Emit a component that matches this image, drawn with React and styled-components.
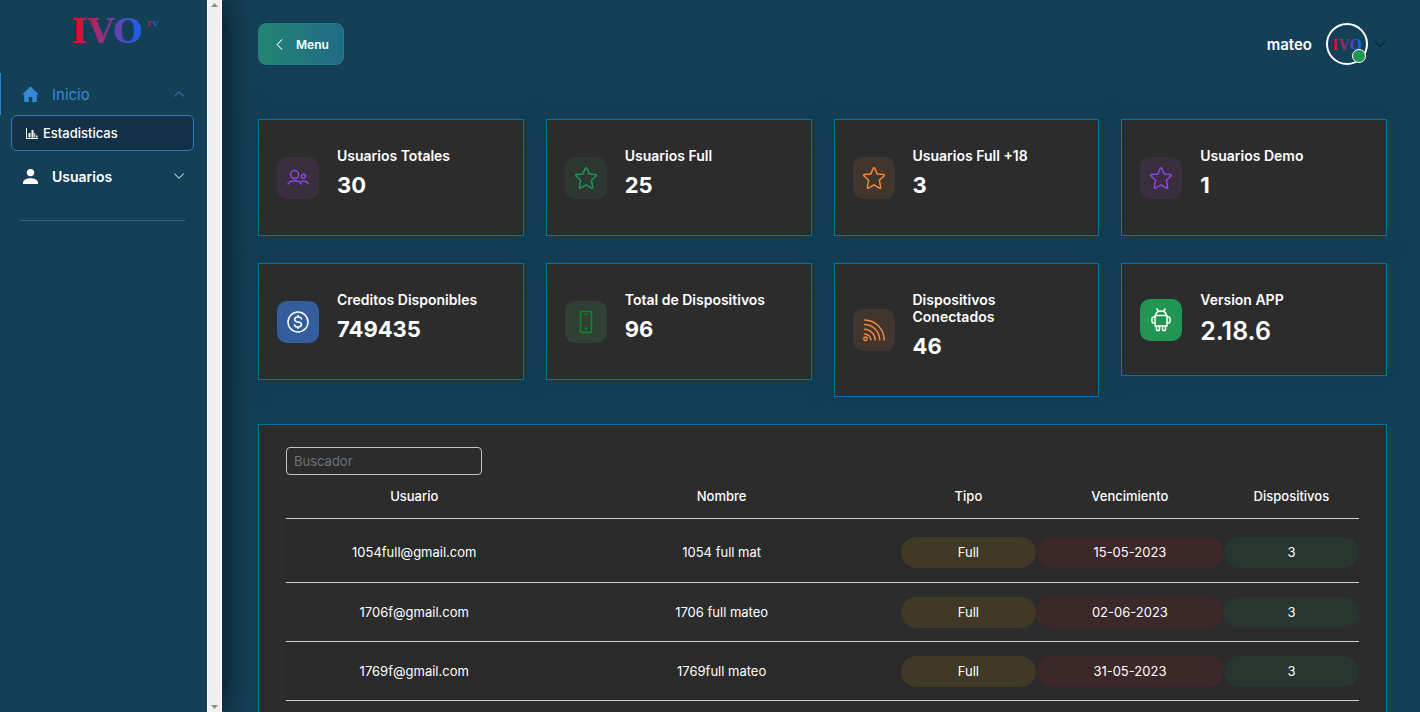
import React, { useState } from "react";
import styled, { createGlobalStyle } from "styled-components";
import { BsChevronDown, BsChevronLeft, BsChevronUp } from "react-icons/bs";

const GlobalStyle = createGlobalStyle`
*, *::before, *::after {
  box-sizing: border-box;
}
body {
  margin: 0;
  background: #144057;
  color: #fff;
  font-family: Inter, "Liberation Sans", sans-serif;
  font-size: 13px;
}
button, input {
  font-family: inherit;
}
h1, h2, p {
  margin: 0;
}
`;

const Page = styled.div`
display: flex;
height: 100vh;
overflow: hidden;
`;

const Sidebar = styled.aside`
display: flex;
flex: 0 0 222px;
box-shadow: 0 0 30px rgba(0, 0, 0, .75);
z-index: 1;
background: #144057;
`;

const SideContent = styled.div`
flex: 1;
`;

const ScrollTrack = styled.div`
display: flex;
flex-direction: column;
justify-content: space-between;
align-items: center;
width: 15px;
padding: 3px 0;
background: #f0f0f0;
border-left: 1px solid #fff;
border-right: 1px solid #fff;
`;

const Brand = styled.h1`
display: flex;
justify-content: center;
height: 73px;
padding-left: 11px;
`;

const SideNav = styled.nav`
display: flex;
flex-direction: column;
`;

const NavButton = styled.button`
display: flex;
align-items: center;
gap: 12px;
height: 42px;
padding: 0 22px 0 20px;
border: 0;
border-left: 1px solid ${pr => pr.$active ? "#3182ce" : "transparent"};
background: none;
color: ${pr => pr.$active ? "#3788d8" : "#fff"};
font-size: ${pr => pr.$active ? "15px" : "14px"};
font-weight: ${pr => pr.$active ? 400 : 600};
text-align: left;
cursor: pointer;

span {
  flex: 1;
}
`;

const SubLink = styled.a`
display: flex;
align-items: center;
gap: 5px;
height: 36px;
margin: 0 13px 4px 11px;
padding: 0 14px;
border: 1px solid #2f77bd;
border-radius: 6px;
background: #123147;
color: #fff;
font-weight: 500;
text-decoration: none;
`;

const Divider = styled.hr`
height: 1px;
margin: 23px 22px 0 20px;
border: 0;
background: #3b6275;
`;

const Main = styled.main`
display: flex;
flex: 1;
flex-direction: column;
min-width: 0;
padding: 23px 33px 0 36px;
overflow: hidden;
`;

const TopBar = styled.header`
display: flex;
align-items: center;
justify-content: space-between;
height: 42px;
margin-bottom: 54px;
`;

const MenuButton = styled.button`
display: flex;
align-items: center;
gap: 10px;
height: 42px;
padding: 0 14px;
border: 1px solid #247f80;
border-radius: 8px;
background: linear-gradient(90deg, #228573, #216b86);
color: #fff;
font-size: 12px;
font-weight: 600;
cursor: pointer;
`;

const UserButton = styled.button`
display: flex;
align-items: center;
padding: 0;
border: 0;
background: none;
color: #fff;
font-size: 15px;
font-weight: 600;
cursor: pointer;

> svg {
  margin-left: 5px;
  color: #0b1e2a;
}
`;

const Avatar = styled.span`
position: relative;
display: flex;
align-items: center;
justify-content: center;
width: 42px;
height: 42px;
margin-left: 14px;
border: 2px solid #fff;
border-radius: 50%;
`;

const OnlineDot = styled.i`
position: absolute;
right: 0;
bottom: 0;
width: 14px;
height: 14px;
border: 1px solid #fff;
border-radius: 50%;
background: #219653;
`;

const Cards = styled.section`
display: grid;
grid-template-columns: repeat(4, 1fr);
align-items: start;
gap: 27px 22px;
margin-bottom: 27px;
`;

const Card = styled.article`
display: flex;
align-items: center;
gap: 18px;
padding: 27px 18px;
border: 1px solid #0b70a8;
background: #2c2c2c;
box-shadow: 0 0 24px rgba(10, 45, 65, .25);
`;

const IconBox = styled.div`
display: flex;
flex: 0 0 42px;
align-items: center;
justify-content: center;
height: 42px;
border-radius: 10px;
background: ${pr => pr.$bg};
color: ${pr => pr.$color};
`;

const CardTitle = styled.h2`
max-width: 150px;
font-size: 14px;
font-weight: 600;
line-height: 17px;
`;

const CardValue = styled.p`
margin: 8px 0 ${pr => pr.$large ? "2px" : "10px"};
font-size: ${pr => pr.$large ? "25px" : "22px"};
font-weight: ${pr => pr.$large ? 600 : 700};
line-height: ${pr => pr.$large ? "30px" : "26px"};
`;

const Panel = styled.section`
flex: 1;
padding: 22px 27px 0;
border: 1px solid #0b70a8;
border-bottom: 0;
background: #2c2c2c;
`;

const SearchInput = styled.input`
display: block;
width: 196px;
height: 28px;
padding: 0 7px;
border: 1px solid #c4c7ca;
border-radius: 4px;
background: transparent;
color: #fff;
font-size: 13px;

&::placeholder {
  color: #6c757d;
  opacity: 1;
}
`;

const Table = styled.table`
width: 100%;
table-layout: fixed;
border-spacing: 0;
text-align: center;
`;

const HeadCell = styled.th`
width: ${pr => pr.$width};
height: 44px;
padding: 0 0 2px;
border-bottom: 1px solid #d0d0d0;
font-weight: 500;
`;

const Cell = styled.td`
padding: 14px 0 13px;
border-bottom: 1px solid #d0d0d0;
font-weight: 400;

tr:first-child > & {
  padding: 18px 0 14px;
}
tr:nth-child(odd) > & {
  background: #2a2a2a;
}
`;

const Pill = styled.span`
display: block;
border-radius: 16px;
background: ${pr => pr.$bg || "transparent"};
line-height: 31px;
`;

const Stops = () => (
  <>
    <stop offset="0" stopColor="#ff0010" />
    <stop offset=".5" stopColor="#83368e" />
    <stop offset="1" stopColor="#0a66ff" />
  </>
);

const Logo = () => (
  <svg width="120" height="60" viewBox="0 0 120 60" role="img" aria-label="IVO TV">
    <defs>
      <linearGradient id="logo" gradientUnits="userSpaceOnUse" x1="20" y1="0" x2="96" y2="0"><Stops /></linearGradient>
      <linearGradient id="logoTv" gradientUnits="userSpaceOnUse" x1="97" y1="0" x2="109" y2="0"><Stops /></linearGradient>
    </defs>
    <g fontFamily="DejaVu Serif, serif" fontWeight="700">
      <text x="58" y="43" fontSize="34" textAnchor="middle" fill="url(#logo)">IVO</text>
      <text x="97" y="26" fontSize="8" fill="url(#logoTv)">TV</text>
    </g>
  </svg>
);

const AvatarLogo = () => (
  <svg width="34" height="30" viewBox="0 0 34 30" aria-hidden="true">
    <defs>
      <linearGradient id="avatar" gradientUnits="userSpaceOnUse" x1="3" y1="0" x2="31" y2="0"><Stops /></linearGradient>
    </defs>
    <text x="17" y="21" fontFamily="Liberation Serif, serif" fontWeight="700" fontSize="16" textAnchor="middle" fill="url(#avatar)">IVO</text>
  </svg>
);

const HomeIcon = () => (
  <svg width="19" height="17" viewBox="0 0 19 17" fill="currentColor">
    <path d="M9.5.5 1 8.4h2.2V16h4.6v-5h3.4v5h4.6V8.4H18z" />
  </svg>
);

const PersonIcon = () => (
  <svg width="19" height="17" viewBox="0 0 19 17" fill="currentColor">
    <circle cx="9.5" cy="4.6" r="3.7" />
    <path d="M2 16v-1.600C2 11.700 6.500 10.200 9.500 10.200S17 11.700 17 14.400V16z" />
  </svg>
);

const ChartIcon = () => (
  <svg width="12" height="12" viewBox="0 0 12 12" fill="currentColor">
    <path d="M0 1h1v10h11v1H0zM2.500 6h2v4.500h-2zM5.500 3h2v7.500h-2zM8.200 6h1v4.500h-1zM10 8.500h1.500v2H10z" />
  </svg>
);

const Arrow = ({ up }) => (
  <svg width="7" height="4" viewBox="0 0 7 4" fill="#8c8c8c">
    <path d={up ? "M0 4 3.500 0 7 4z" : "M0 0h7L3.500 4z"} />
  </svg>
);

const Line = ({ children, width = 1.3 }) => (
  <svg width="24" height="24" viewBox="0 0 24 24" fill="none" stroke="currentColor" strokeWidth={width} strokeLinecap="round" strokeLinejoin="round">
    {children}
  </svg>
);

const UsersIcon = () => (
  <Line width={1.5}>
    <circle cx="8.600" cy="8.600" r="4" />
    <circle cx="17.400" cy="10.300" r="2" />
    <path d="M2 18c2.600-4.200 10.600-4.200 13.400 0M15.400 15.600c2.300-1 5-.3 6.800 1.900" />
  </Line>
);

const StarIcon = () => (
  <Line width={1.5}>
    <path d="M11.300 2.200c.3-.6 1.100-.6 1.400 0l2.500 5.700 6.300.7c.8.100 1.100.9.500 1.400l-4.600 4.300 1.300 7.100c.1.700-.6 1.200-1.200.8L12 18.800l-5.500 3.400c-.6.400-1.300-.1-1.200-.8l1.300-7.100L2 10c-.6-.5-.3-1.300.5-1.400l6.300-.7z" />
  </Line>
);

const MoneyIcon = () => (
  <Line width={1.5}>
    <circle cx="12" cy="12" r="10" />
    <path d="M15.500 9c-.2-1.400-1.300-2-3-2H12c-2 0-3.300.8-3.300 2.400S10 11.800 12 12s3.500.8 3.500 2.500S14 17 12 17s-3.300-.7-3.500-2.200M12 5.500V7m0 10v1.500" />
  </Line>
);

const PhoneIcon = () => (
  <Line width={1.5}>
    <rect x="6.500" y="1.500" width="11" height="21" rx="1.500" />
    <path d="M10.500 4.500h3" />
    <circle cx="12" cy="18.500" r=".6" />
  </Line>
);

const SignalIcon = () => (
  <Line width={1.5}>
    <circle cx="3.500" cy="20.800" r="1.700" />
    <path d="M2.500 16a6.500 6.500 0 0 1 6.500 6M2.500 11.300a11 11 0 0 1 10.700 10.700M2.500 6.600A15.400 15.400 0 0 1 17.700 22M2.500 2A20 20 0 0 1 22.200 22" />
  </Line>
);

const AndroidIcon = () => (
  <Line width={1.5}>
    <path d="M6 7.500h12V18H6zM6.500 7.300C7 4.600 9 3 12 3s5 1.600 5.500 4.300M8 1l1.500 2.500M16 1l-1.500 2.500" />
    <path d="M6 9H4.500C3.400 9 3 9.500 3 10.500v3c0 1 .5 1.500 1.500 1.500H6M18 9h1.500c1.100 0 1.500.5 1.500 1.500v3c0 1-.5 1.500-1.500 1.500H18M7.500 18v3.500c0 1.500 3 1.500 3 0V18m3 0v3.500c0 1.500 3 1.500 3 0V18" />
  </Line>
);

const stats = [
  { title: "Usuarios Totales", value: "30", Icon: UsersIcon, color: "#8f45e5", bg: "#392f3f" },
  { title: "Usuarios Full", value: "25", Icon: StarIcon, color: "#219653", bg: "#2c3831" },
  { title: "Usuarios Full +18", value: "3", Icon: StarIcon, color: "#f2883f", bg: "#41362e" },
  { title: "Usuarios Demo", value: "1", Icon: StarIcon, color: "#8f45e5", bg: "#392f3f" },
  { title: "Creditos Disponibles", value: "749435", Icon: MoneyIcon, color: "#fff", bg: "#345d9d" },
  { title: "Total de Dispositivos", value: "96", Icon: PhoneIcon, color: "#078c2d", bg: "#304034" },
  { title: "Dispositivos Conectados", value: "46", Icon: SignalIcon, color: "#f2883f", bg: "#41362e" },
  { title: "Version APP", value: "2.18.6", Icon: AndroidIcon, color: "#fff", bg: "#219653", large: true },
];

const columns = [
  ["Usuario", "23.9%"],
  ["Nombre", "33.4%"],
  ["Tipo", "12.6%"],
  ["Vencimiento", "17.5%"],
  ["Dispositivos", "12.6%"],
];

const users = [
  { email: "1054full@gmail.com", name: "1054 full mat", type: "Full", expires: "15-05-2023", devices: 3 },
  { email: "1706f@gmail.com", name: "1706 full mateo", type: "Full", expires: "02-06-2023", devices: 3 },
  { email: "1769f@gmail.com", name: "1769full mateo", type: "Full", expires: "31-05-2023", devices: 3 },
];

function App() {
  const [open, setOpen] = useState(true);
  const [showMenu, setShowMenu] = useState(true);
  const [search, setSearch] = useState("");

  const rows = users.filter(u => (u.email + u.name).toLowerCase().includes(search.toLowerCase()));

  return (
    <>
      <GlobalStyle />
      <Page>
        {showMenu && (
          <Sidebar>
            <SideContent>
              <Brand><Logo /></Brand>
              <SideNav>
                <NavButton $active aria-expanded={open} onClick={() => setOpen(!open)}>
                  <HomeIcon />
                  <span>Inicio</span>
                  {open ? <BsChevronUp size={12} /> : <BsChevronDown size={12} />}
                </NavButton>
                {open && <SubLink href="#estadisticas"><ChartIcon />Estadisticas</SubLink>}
                <NavButton>
                  <PersonIcon />
                  <span>Usuarios</span>
                  <BsChevronDown size={12} />
                </NavButton>
              </SideNav>
              <Divider />
            </SideContent>
            <ScrollTrack aria-hidden="true">
              <Arrow up />
              <Arrow />
            </ScrollTrack>
          </Sidebar>
        )}
        <Main>
          <TopBar>
            <MenuButton onClick={() => setShowMenu(!showMenu)}>
              <BsChevronLeft size={13} />
              Menu
            </MenuButton>
            <UserButton>
              mateo
              <Avatar>
                <AvatarLogo />
                <OnlineDot />
              </Avatar>
              <BsChevronDown size={14} />
            </UserButton>
          </TopBar>
          <Cards>
            {stats.map(({ title, value, Icon, color, bg, large }) => (
              <Card key={title}>
                <IconBox $color={color} $bg={bg}><Icon /></IconBox>
                <div>
                  <CardTitle>{title}</CardTitle>
                  <CardValue $large={large}>{value}</CardValue>
                </div>
              </Card>
            ))}
          </Cards>
          <Panel>
            <SearchInput
              aria-label="Buscador"
              placeholder="Buscador"
              value={search}
              onChange={e => setSearch(e.target.value)}
            />
            <Table>
              <thead>
                <tr>
                  {columns.map(([label, width]) => <HeadCell key={label} $width={width}>{label}</HeadCell>)}
                </tr>
              </thead>
              <tbody>
                {rows.map(u => (
                  <tr key={u.email}>
                    <Cell><Pill>{u.email}</Pill></Cell>
                    <Cell><Pill>{u.name}</Pill></Cell>
                    <Cell><Pill $bg="#3f3926">{u.type}</Pill></Cell>
                    <Cell><Pill $bg="#3c2729">{u.expires}</Pill></Cell>
                    <Cell><Pill $bg="#29352f">{u.devices}</Pill></Cell>
                  </tr>
                ))}
              </tbody>
            </Table>
          </Panel>
        </Main>
      </Page>
    </>
  );
}

export default App;
